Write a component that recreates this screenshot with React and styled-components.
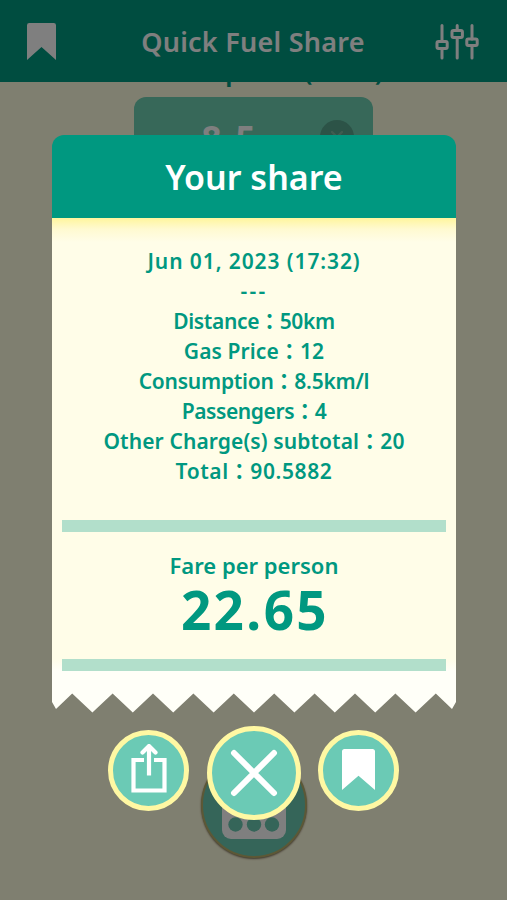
import React from "react";
import styled, { createGlobalStyle } from "styled-components";

const receipt = [
  { text: "Jun 01, 2023 (17:32)", spacing: 0.9 },
  { text: "---", spacing: 2.2 },
  { text: "Distance：50km", spacing: -0.35 },
  { text: "Gas Price：12", spacing: 0.1 },
  { text: "Consumption：8.5km/l", spacing: -0.25 },
  { text: "Passengers：4", spacing: -0.4 },
  { text: "Other Charge(s) subtotal：20", spacing: 0.1 },
  { text: "Total：90.5882", spacing: 0.6 },
];

// torn paper edge: 10 teeth over the 404px wide receipt
const tornEdge = () => {
  const points = ["0 0", "404px 0", "404px 484px", "400px 491px"];
  for (let i = 9; i >= 0; i--) {
    points.push(`${i * 40.4 + 20.2}px 475.5px`);
    if (i > 0) points.push(`${i * 40.4}px 494.5px`);
  }
  points.push("4px 491px", "0 484px");
  return points.join(", ");
};

const BookmarkIcon = ({ width, height }) => (
  <svg width={width} height={height} viewBox="0 0 32 40" preserveAspectRatio="none">
    <path d="M2.5 0H29.5Q32 0 32 2.5V40L16 26L0 40V2.5Q0 0 2.5 0Z" fill="#fff" />
  </svg>
);

const SlidersIcon = () => (
  <svg width="44" height="38" viewBox="0 0 44 38" fill="none" stroke="#fff" strokeWidth="3" strokeLinecap="round">
    <path d="M7 3.5V19M7 27V36M22.2 3.5V8M22.2 16V36M37 3.5V17M37 24V36" />
    <rect x="2" y="19.5" width="10.2" height="7" rx="1.5" />
    <rect x="17" y="8.5" width="10.4" height="7" rx="1.5" />
    <rect x="31.8" y="17" width="10.4" height="6.5" rx="1.5" />
  </svg>
);

const ShareIcon = () => (
  <svg width="36" height="50" viewBox="0 0 36 50" fill="none" stroke="#fff" strokeWidth="4.2">
    <path d="M13 16H2.5V46.5H33.5V16H23" />
    <path d="M18 31.5V2.5" />
    <path d="M11.5 8.5L18 2L24.5 8.5" strokeLinecap="round" strokeLinejoin="round" />
  </svg>
);

const CloseIcon = () => (
  <svg width="48" height="48" viewBox="0 0 48 48" stroke="#fff" strokeWidth="6" strokeLinecap="round">
    <path d="M4 4L44 44M44 4L4 44" />
  </svg>
);

const CalculatorIcon = () => (
  <svg width="64" height="68" viewBox="0 0 64 68">
    <rect width="64" height="68" rx="9" fill="#fff" />
    <g fill="#6bcab2">
      <rect x="8" y="8" width="48" height="14" rx="3" />
      <circle cx="13.5" cy="35" r="7" />
      <circle cx="32" cy="35" r="7" />
      <circle cx="50" cy="35" r="7" />
      <circle cx="13.5" cy="53.5" r="7.2" />
      <circle cx="32" cy="53.5" r="7.2" />
      <circle cx="50" cy="53.5" r="7.2" />
    </g>
  </svg>
);

function App() {
  return (
    <>
      <GlobalStyle />
      <Screen>
        <TopBar>
          <BookmarkIcon width={29} height={37} />
          <AppTitle>Quick Fuel Share</AppTitle>
          <SlidersIcon />
        </TopBar>
        <Form>
          <FieldLabel>Consumption (km/l)</FieldLabel>
          <Field>
            <FieldValue>8.5</FieldValue>
            <ClearButton>
              <svg width="14" height="14" viewBox="0 0 14 14" stroke="#7fb8a0" strokeWidth="2.4" strokeLinecap="round">
                <path d="M2 2L12 12M12 2L2 12" />
              </svg>
            </ClearButton>
          </Field>
          <CalculateButton>
            <CalculatorIcon />
          </CalculateButton>
        </Form>

        <Overlay>
          <ModalHeader>Your share</ModalHeader>
          <Paper>
            <Lines>
              {receipt.map((line) => (
                <Line key={line.text} $spacing={line.spacing}>{line.text}</Line>
              ))}
            </Lines>
            <Fare>
              <FareLabel>Fare per person</FareLabel>
              <FareValue>22.65</FareValue>
            </Fare>
          </Paper>
          <Actions>
            <RoundButton aria-label="Share">
              <ShareIcon />
            </RoundButton>
            <RoundButton $large aria-label="Close">
              <CloseIcon />
            </RoundButton>
            <RoundButton aria-label="Bookmark">
              <BookmarkIcon width={33} height={41} />
            </RoundButton>
          </Actions>
        </Overlay>
      </Screen>
    </>
  );
}

const GlobalStyle = createGlobalStyle`
  * {
    box-sizing: border-box;
  }
  body {
    margin: 0;
    font-family: "Noto Sans", "Noto Sans CJK JP", sans-serif;
  }
  svg {
    display: block;
    flex-shrink: 0;
  }
`;

const Screen = styled.div`
  position: relative;
  display: flex;
  flex-direction: column;
  width: 507px;
  height: 900px;
  overflow: hidden;
  background: #fffee0;
`;

const TopBar = styled.header`
  display: flex;
  align-items: center;
  justify-content: space-between;
  height: 82px;
  flex-shrink: 0;
  padding: 0 28px 0 27px;
  background: #009a80;
`;

const AppTitle = styled.h1`
  margin: 2px 0 0 15px;
  color: #fff;
  font-size: 27px;
  font-weight: 600;
  line-height: 40px;
  letter-spacing: 0.25px;
  white-space: nowrap;
`;

const Form = styled.main`
  display: flex;
  flex: 1;
  flex-direction: column;
  align-items: center;
  overflow: hidden;
  padding-bottom: 42px;
`;

const FieldLabel = styled.label`
  margin: -30px 8px 0 0;
  color: #009880;
  font-size: 27px;
  font-weight: 600;
  line-height: 36px;
  letter-spacing: 0.4px;
`;

const Field = styled.div`
  display: grid;
  grid-template-columns: 1fr 34px;
  align-items: center;
  width: 239px;
  height: 80px;
  margin-top: 9px;
  padding: 0 19px 0 5px;
  border-radius: 12px;
  background: #6fd0b2;
`;

const FieldValue = styled.span`
  padding-top: 3px;
  color: #fff;
  font-size: 35px;
  font-weight: 700;
  line-height: 40px;
  text-align: center;
  letter-spacing: 2px;
`;

const ClearButton = styled.span`
  display: flex;
  align-items: center;
  justify-content: center;
  width: 34px;
  height: 34px;
  border-radius: 50%;
  background: #58a68e;
`;

const CalculateButton = styled.button`
  display: flex;
  align-items: center;
  justify-content: center;
  width: 106px;
  height: 106px;
  margin: auto 0 0 1px;
  padding: 0;
  border: 2px solid #b8b06c;
  border-radius: 50%;
  background: #6bcab2;
  box-shadow: 0 1px 2px #80705a;
`;

const Overlay = styled.div`
  position: absolute;
  inset: 0;
  display: flex;
  flex-direction: column;
  align-items: center;
  padding: 135px 0 0 1px;
  background: rgba(0, 0, 0, 0.5);
`;

const ModalHeader = styled.h2`
  width: 404px;
  height: 83px;
  margin: 0;
  border-radius: 12px 12px 0 0;
  background: #009880;
  color: #fff;
  font-size: 34px;
  font-weight: 600;
  line-height: 84px;
  text-align: center;
`;

const Paper = styled.section`
  width: 404px;
  height: 495px;
  padding: 28px 10px 0;
  background: linear-gradient(#fff59d 0, #fffad0 11px, #fffde8 24px, #fffde8 441px, #fffff8 453px);
  color: #009880;
  text-align: center;
  clip-path: polygon(${tornEdge()});
`;

const Lines = styled.div`
  height: 274px;
`;

const Line = styled.p`
  margin: 0;
  font-size: 21px;
  font-weight: 600;
  line-height: 30px;
  white-space: nowrap;
  letter-spacing: ${(props) => props.$spacing}px;
`;

const Fare = styled.div`
  height: 151px;
  padding-top: 18px;
  border-top: 12px solid #b2dfcb;
  border-bottom: 12px solid #b2dfcb;
`;

const FareLabel = styled.p`
  margin: 0;
  font-size: 22px;
  font-weight: 600;
  line-height: 30px;
`;

const FareValue = styled.p`
  margin: 0;
  padding-left: 2px;
  font-size: 53px;
  font-weight: 700;
  line-height: 60px;
  letter-spacing: 2.4px;
`;

const Actions = styled.div`
  display: flex;
  align-items: flex-start;
  gap: 17.5px;
  margin: 13px 1px 0 0;
`;

const RoundButton = styled.button`
  display: flex;
  align-items: center;
  justify-content: center;
  width: ${(props) => (props.$large ? 94 : 81)}px;
  height: ${(props) => (props.$large ? 94 : 81)}px;
  margin: ${(props) => (props.$large ? 0 : 4)}px 0 0;
  padding: 0 0 ${(props) => (props.$large ? 0 : 3)}px;
  border: 5px solid #fff8a3;
  border-radius: 50%;
  background: #6bcab5;
`;

export default App;
